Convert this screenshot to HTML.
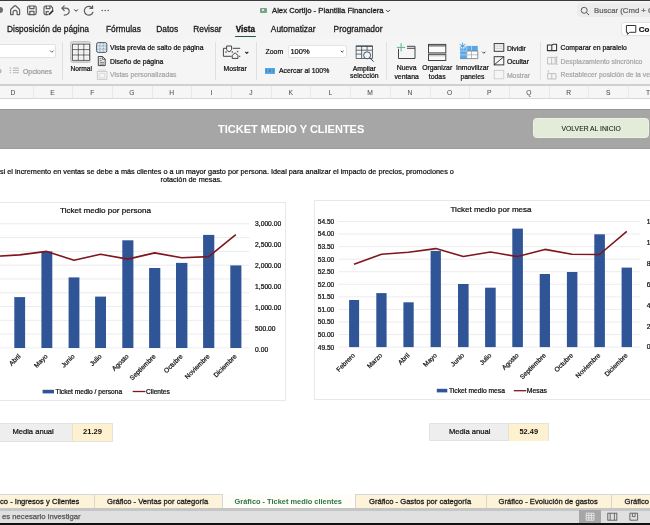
<!DOCTYPE html>
<html><head><meta charset="utf-8">
<style>
*{margin:0;padding:0;box-sizing:border-box}
html,body{width:650px;height:525px;overflow:hidden;background:#fff}
body{position:relative;font-family:"Liberation Sans",sans-serif;color:#111}
.a{position:absolute;white-space:nowrap;line-height:1}
.b{font-weight:700}
.m{font-weight:400;-webkit-text-stroke:0.22px currentColor}
.m2{font-weight:400;-webkit-text-stroke:0.27px currentColor}
svg{position:absolute;overflow:visible}
</style></head><body>
<div id="wrap" style="position:absolute;left:0;top:0;width:650px;height:525px;will-change:transform">

<!-- top title bar -->
<div class="a" style="left:0;top:0;width:650px;height:38px;background:#f4f4f4"></div>
<div class="a" style="left:0;top:0;width:650px;height:1px;background:#3b3b3b"></div>
<div class="a" style="left:-3px;top:7px;width:6px;height:6px;border-radius:50%;background:#6e6e6e"></div>

<!-- quick access icons -->
<svg style="left:0;top:0" width="130" height="20" fill="none" stroke="#5e5e5e" stroke-width="1.2" stroke-linejoin="round" stroke-linecap="round">
  <path d="M10.6 14.6 V10.2 Q10.6 9.5 11.1 9 L14.3 6 Q15.1 5.3 15.9 6 L19.1 9 Q19.6 9.5 19.6 10.2 V14.6 H17.1 V12.3 A2 2 0 0 0 13.1 12.3 V14.6 Z"/>
  <rect x="27.6" y="6" width="8.6" height="8.7" rx="1.6"/>
  <path d="M29.8 6 V8.6 H34 V6 M29.8 14.7 V11.4 H34 V14.7"/>
  <path d="M48 14.7 H45.6 Q44 14.7 44 13.1 V7.6 Q44 6 45.6 6 H50.8 L52.6 7.8 V9.8"/>
  <path d="M46.2 6 V8.6 H50 V6 M46.2 14.7 V11.6 H48.5"/>
  <path d="M49 14.6 L53.2 10.4" stroke="#333" stroke-width="1.7" stroke-linecap="butt"/>
  <path d="M62.3 8.2 H65.6 Q69.2 8.2 69.2 11.4 Q69.2 14.2 64.2 15.2"/>
  <path d="M64.2 5.9 L61.9 8.2 L64.2 10.5"/>
  <path d="M74.5 9.7 L76.1 11.3 L77.7 9.7" stroke="#333" stroke-width="1"/>
  <path d="M92.3 8.2 A4.4 4.4 0 1 0 92.9 12.2"/>
  <path d="M90 8.4 H92.6 V5.8"/>
  <circle cx="102.2" cy="10.6" r="0.75" fill="#555" stroke="none"/><circle cx="105.2" cy="10.6" r="0.75" fill="#555" stroke="none"/><circle cx="108.2" cy="10.6" r="0.75" fill="#555" stroke="none"/>
</svg>

<!-- title -->
<div class="a" style="left:259.8px;top:8px;width:7.4px;height:4.7px;background:#79a489;border-radius:0.8px"></div>
<div class="a" style="left:261.6px;top:9.2px;width:2.2px;height:2.3px;background:#d5e6da"></div>
<div class="a m" style="left:272px;top:6.6px;font-size:7.72px;color:#222;-webkit-text-stroke:0.3px #222">Alex Cortijo - Plantilla Financiera</div>
<svg style="left:0;top:0" width="1" height="1"><path d="M386 9.9 L388 11.9 L390 9.9" fill="none" stroke="#444" stroke-width="1"/></svg>

<!-- search -->
<div class="a" style="left:577.3px;top:3px;width:90px;height:14.3px;background:#ececec;border-radius:4px"></div>
<svg style="left:0;top:0" width="1" height="1"><circle cx="584.2" cy="10.3" r="3" fill="none" stroke="#555" stroke-width="0.95"/><path d="M586.4 12.5 L589 15" stroke="#555" stroke-width="1"/></svg>
<div class="a m" style="left:594px;top:6.9px;font-size:7.75px;color:#5e5e5e">Buscar (Cmd + C</div>

<!-- menu tabs -->
<div class="a m2" style="left:7px;top:24.9px;font-size:8.4px;color:#1a1a1a">Disposición de página</div>
<div class="a m2" style="left:106px;top:24.9px;font-size:8.4px;color:#1a1a1a">Fórmulas</div>
<div class="a m2" style="left:156.3px;top:24.9px;font-size:8.4px;color:#1a1a1a">Datos</div>
<div class="a m2" style="left:193.2px;top:24.9px;font-size:8.4px;color:#1a1a1a">Revisar</div>
<div class="a b" style="left:235.8px;top:25.6px;font-size:8.15px;color:#111;-webkit-text-stroke:0.3px #111">Vista</div>
<div class="a" style="left:235px;top:35.5px;width:21px;height:1.4px;background:#1f5c3c;border-radius:1px"></div>
<div class="a m2" style="left:270.8px;top:24.9px;font-size:8.4px;color:#1a1a1a">Automatizar</div>
<div class="a m2" style="left:333.6px;top:24.9px;font-size:8.4px;color:#1a1a1a">Programador</div>
<div class="a" style="left:620.8px;top:22px;width:40px;height:14px;background:#fff;border:0.8px solid #e2e2e2;border-radius:3px"></div>
<svg style="left:0;top:0" width="1" height="1"><path d="M626.4 25.5 H635.8 V32.3 H629.8 L627.4 34.3 V32.3 H626.4 Z" fill="none" stroke="#333" stroke-width="1" stroke-linejoin="round"/></svg>
<div class="a b" style="left:638.8px;top:26.2px;font-size:8px;color:#111;-webkit-text-stroke:0.2px #111">Co</div>

<!-- ribbon -->
<div class="a" style="left:0;top:38px;width:650px;height:46px;background:#f5f5f5"></div>
<div class="a" style="left:-2px;top:44px;width:57.8px;height:14.4px;background:#fff;border:0.8px solid #e2e2e2;border-radius:2px"></div>
<svg style="left:0;top:0" width="1" height="1"><path d="M50 50.5 L51.8 52.3 L53.6 50.5" fill="none" stroke="#555" stroke-width="0.9"/></svg>
<svg style="left:0;top:0" width="1" height="1" stroke="#a4a4a4" stroke-width="0.9">
  <path d="M10.3 67.6 V68.7 M10.3 69.9 V71 M10.3 72.2 V73.3" stroke-width="1.1"/><path d="M12.9 68.1 H18.9 M12.9 70.4 H18.9 M12.9 72.7 H18.9" stroke-width="0.8"/>
</svg>
<div class="a m" style="left:-2.4px;top:67.4px;font-size:7.2px;color:#9a9a9a">o</div>
<div class="a m" style="left:23px;top:68.53px;font-size:6.85px;color:#9a9a9a">Opciones</div>
<div class="a" style="left:62px;top:42px;width:1px;height:38px;background:#dedede"></div>

<!-- Normal -->
<div class="a" style="left:70.2px;top:41.4px;width:21px;height:21.7px;background:linear-gradient(#dadada,#cfcfcf);border:0.8px solid #c6c6c6;border-radius:2.5px"></div>
<svg style="left:0;top:0" width="1" height="1" fill="none" stroke="#444" stroke-width="0.8">
  <rect x="72.6" y="44.2" width="16.9" height="16.1" fill="#fafafa"/>
  <path d="M78.3 44.2 V60.3 M83.8 44.2 V60.3 M72.6 49.6 H89.5 M72.6 55 H89.5"/>
  <path d="M75.4 44.2 V60.3 M81 44.2 V60.3 M86.6 44.2 V60.3 M72.6 46.9 H89.5 M72.6 52.3 H89.5 M72.6 57.7 H89.5" stroke="#c4c4c4" stroke-width="0.45" stroke-dasharray="0.9 0.9"/>
</svg>
<div class="a m" style="left:51.2px;width:60px;text-align:center;top:66.0px;font-size:6.64px;color:#111">Normal</div>

<svg style="left:0;top:0" width="1" height="1" fill="none" stroke-width="0.9">
  <rect x="96.6" y="42.6" width="10.2" height="9.8" rx="1.6" stroke="#4f5a63" stroke-width="1" fill="#dbe8f1"/>
  <path d="M99.9 43.2 V51.8 M103.4 43.2 V51.8 M97.2 45.9 H106.2 M97.2 49.2 H106.2" stroke="#6f8192" stroke-width="0.6" stroke-dasharray="1 0.6"/>
  <path d="M98.3 56.5 H102.6 L105.2 59.2 V65.6 H98.3 Z" stroke="#333" stroke-linejoin="round" fill="#f3f3f3"/>
  <path d="M102.4 56.6 V59.4 H105.2" stroke="#333" stroke-width="0.7"/>
  <path d="M99.6 58.6 H101.2 M99.6 60.4 H101.6 M99.6 62.3 H104 M99.6 64.1 H104" stroke="#555" stroke-width="0.8"/>
  <rect x="97.3" y="71.4" width="9.6" height="8" stroke="#c8c8c8"/>
  <path d="M98.2 70 H106 M99.3 73.3 H104.9 V78 H99.3 Z" stroke="#cfcfcf" stroke-width="0.7"/>
</svg>
<div class="a m" style="left:110px;top:44.92px;font-size:6.85px;color:#111">Vista previa de salto de página</div>
<div class="a m" style="left:110px;top:58.82px;font-size:6.85px;color:#111">Diseño de página</div>
<div class="a m" style="left:110px;top:72.22px;font-size:6.85px;color:#a6a6a6">Vistas personalizadas</div>
<div class="a" style="left:214.5px;top:42px;width:1px;height:38px;background:#e0e0e0"></div>

<!-- Mostrar -->
<svg style="left:0;top:0" width="1" height="1" fill="none" stroke="#3c3c3c" stroke-width="0.95" stroke-linejoin="round">
  <path d="M226.3 48.3 H223.4 V56.3 H231.5"/>
  <path d="M232.8 48.3 H240.2"/>
  <path d="M226.6 46 H231.6 V49.3 Q231.6 50.6 229.1 51.8 Q226.6 50.6 226.6 49.3 Z"/>
  <path d="M232.2 58.4 V55.4 L235.1 52.8 L238 55.4 V58.4 Z"/>
  <path d="M239 56.3 H240.3"/>
  <circle cx="226" cy="52" r="0.35" fill="#555"/><circle cx="232.2" cy="52" r="0.35" fill="#555"/><circle cx="237.7" cy="51.7" r="0.35" fill="#555"/>
  <path d="M245.3 51.9 L246.8 53.4 L248.3 51.9" stroke="#222" stroke-width="1.1"/>
</svg>
<div class="a m" style="left:205.1px;width:60px;text-align:center;top:65.5px;font-size:6.85px;color:#111">Mostrar</div>
<div class="a" style="left:256px;top:42px;width:1px;height:38px;background:#e0e0e0"></div>

<!-- Zoom -->
<div class="a m" style="left:265.6px;top:48.72px;font-size:6.85px;color:#111">Zoom</div>
<div class="a" style="left:287.6px;top:45px;width:59.4px;height:13px;background:#fff;border:0.8px solid #e4e4e4;border-radius:2px"></div>
<div class="a m" style="left:290.4px;top:48.2px;font-size:7.5px;color:#111">100%</div>
<svg style="left:0;top:0" width="1" height="1"><path d="M340.8 50.8 L342.2 52.2 L343.6 50.8" fill="none" stroke="#333" stroke-width="0.9"/></svg>
<div class="a" style="left:265px;top:68px;width:10px;height:5.6px;background:#5aa9e0"></div>
<svg style="left:0;top:0" width="1" height="1" fill="none" stroke="#2d6fa6" stroke-width="0.6">
  <path d="M266.3 69 V72.6 M268.8 69.2 L270.8 72.4 M270.8 69.2 L268.8 72.4 M273.2 69 V72.6"/>
</svg>
<div class="a m" style="left:279px;top:68.32px;font-size:6.85px;color:#111">Acercar al 100%</div>

<!-- Ampliar seleccion -->
<svg style="left:0;top:0" width="1" height="1" fill="none" stroke="#37424a" stroke-width="0.75">
  <path d="M361.6 50.2 H372.6 V58.6 H361.6 Z" fill="#e6f1f9" stroke="none"/>
  <rect x="356.1" y="46" width="16.5" height="12.6" fill="none"/>
  <path d="M356.1 46.2 H372.6" stroke-width="1.1"/>
  <path d="M361.6 46 V58.6 M367.1 46 V50.2 M356.1 50.2 H372.6 M356.1 54.1 H361.6"/>
  <circle cx="367.1" cy="55.3" r="3.5" fill="#eef5fb" stroke-width="0.9"/>
  <path d="M369.7 57.8 L373.6 61.6" stroke-width="1"/>
</svg>
<div class="a m" style="left:334.3px;width:60px;text-align:center;top:65.6px;font-size:6.85px;color:#111">Ampliar</div>
<div class="a m" style="left:334.3px;width:60px;text-align:center;top:73.30px;font-size:6.85px;color:#111">selección</div>
<div class="a" style="left:385.5px;top:42px;width:1px;height:38px;background:#e0e0e0"></div>

<!-- Nueva ventana -->
<svg style="left:0;top:0" width="1" height="1" fill="none" stroke-width="0.95">
  <path d="M398.5 48.8 V58.5 H415 V46.3 H407" stroke="#3c3c3c"/>
  <path d="M407 48.3 H415" stroke="#3c3c3c"/>
  <path d="M401.1 43.2 V51.5 M396.9 47.4 H405.2" stroke="#4fae78" stroke-width="0.9"/>
</svg>
<div class="a m" style="left:376.6px;width:60px;text-align:center;top:65.4px;font-size:6.85px;color:#111">Nueva</div>
<div class="a m" style="left:376.6px;width:60px;text-align:center;top:73.60px;font-size:6.85px;color:#111">ventana</div>

<!-- Organizar todas -->
<svg style="left:0;top:0" width="1" height="1" fill="none" stroke="#3c3c3c" stroke-width="0.95">
  <rect x="428.5" y="44.4" width="17.3" height="8.5" fill="#fbfbfb"/>
  <path d="M428.5 45.9 H445.8"/>
  <rect x="428.5" y="54.3" width="17.3" height="6.2" fill="#fbfbfb"/>
  <path d="M428.5 55.8 H445.8" stroke="#888" stroke-width="0.6"/>
</svg>
<div class="a m" style="left:407.2px;width:60px;text-align:center;top:65.4px;font-size:6.85px;color:#111">Organizar</div>
<div class="a m" style="left:407.2px;width:60px;text-align:center;top:73.60px;font-size:6.85px;color:#111">todas</div>

<!-- Inmovilizar -->
<svg style="left:0;top:0" width="1" height="1" fill="none" stroke-width="0.9">
  <rect x="460.1" y="45.9" width="17.7" height="12.7" fill="#fff"/>
  <rect x="460.1" y="45.9" width="17.7" height="5.1" fill="#5ba7e6" stroke="none"/>
  <rect x="460.1" y="45.9" width="6.7" height="12.7" fill="#5ba7e6" stroke="none"/>
  <path d="M466.8 51 V58.6 M471.5 51 V58.6 M466.8 54.8 H477.8" stroke="#8a96a0" stroke-width="0.6"/>
  <path d="M460.1 51 H466.8 M460.1 54.8 H466.8 M471.5 45.9 V51 M466.8 45.9 V51" stroke="#d7ebfa" stroke-width="0.6"/>
  <path d="M477.8 51 V58.6 H460.1 M466.8 51 H477.8" stroke="#6b7884" stroke-width="0.8"/>
  <path d="M462.6 42.6 V49.2 M459.7 44.25 L465.5 47.55 M459.7 47.55 L465.5 44.25" stroke="#f4f4f4" stroke-width="2.2"/>
  <path d="M462.6 42.6 V49.2 M459.7 44.25 L465.5 47.55 M459.7 47.55 L465.5 44.25" stroke="#3f97de" stroke-width="0.85"/>
  <path d="M482.2 51.7 L483.8 53.3 L485.4 51.7" stroke="#333" stroke-width="0.95"/>
</svg>
<div class="a m" style="left:442.4px;width:60px;text-align:center;top:65.4px;font-size:6.85px;color:#111">Inmovilizar</div>
<div class="a m" style="left:442.4px;width:60px;text-align:center;top:73.60px;font-size:6.85px;color:#111">paneles</div>

<!-- Dividir etc -->
<svg style="left:0;top:0" width="1" height="1" fill="none" stroke="#333" stroke-width="0.95">
  <rect x="494.2" y="43.6" width="9.6" height="7.7"/>
  <path d="M494.2 46.1 H503.8 M494.2 48.3 H503.8" stroke="#aaa" stroke-width="0.45"/>
  <rect x="494.2" y="56.7" width="9.6" height="8.2"/>
  <path d="M494.2 64.9 L503.8 56.7"/>
  <rect x="494.2" y="70.4" width="9.6" height="8.4" stroke="#cfcfcf"/>
</svg>
<div class="a m" style="left:506.9px;top:45.52px;font-size:6.85px;color:#111">Dividir</div>
<div class="a m" style="left:506.9px;top:59.00px;font-size:6.85px;color:#111">Ocultar</div>
<div class="a m" style="left:506.9px;top:72.60px;font-size:6.85px;color:#a6a6a6">Mostrar</div>
<div class="a" style="left:540.2px;top:42px;width:1px;height:38px;background:#e0e0e0"></div>

<svg style="left:0;top:0" width="1" height="1" fill="none" stroke-width="0.95" stroke-linejoin="round">
  <path d="M547.4 45 H551.8 V50.6 H547.4 Z M551.8 50.6 V45 L553.6 44.2 H556.6 V50.6 Z" stroke="#333" stroke-width="1.05"/>
  <path d="M547.6 57.4 H551.6 V64 H547.6 Z M551.6 57.4 H555.2 V64 H551.6 M556.6 56.6 V64.8 M555.8 57.4 L556.6 56.6 L557.4 57.4 M555.8 64 L556.6 64.8 L557.4 64" stroke="#bdbdbd"/>
  <path d="M548.3 70 V72.6 M547.6 73.6 H551.8 V79 H547.6 Z M551.8 73.6 H556 V79 H551.8" stroke="#bdbdbd"/>
</svg>
<div class="a m" style="left:560.6px;top:45.12px;font-size:6.85px;color:#111">Comparar en paralelo</div>
<div class="a m" style="left:560.6px;top:58.92px;font-size:6.85px;color:#a6a6a6">Desplazamiento sincrónico</div>
<div class="a m" style="left:560.6px;top:72.12px;font-size:6.85px;color:#a6a6a6">Restablecer posición de la ventana</div>

<!-- ribbon bottom line -->
<div class="a" style="left:0;top:83.8px;width:650px;height:2.2px;background:#d0d0d0"></div>

<!-- column headers -->
<div class="a" style="left:0;top:86px;width:650px;height:12.5px;background:#f6f6f6"></div>
<div class="a" style="left:0;top:98px;width:650px;height:1.2px;background:#d8d8d8"></div>
<div class="a" style="left:2.90px;top:90.3px;width:20px;text-align:center;font-size:6.7px;color:#505050;-webkit-text-stroke:0.05px #505050">D</div>
<div class="a" style="left:42.59px;top:90.3px;width:20px;text-align:center;font-size:6.7px;color:#505050;-webkit-text-stroke:0.05px #505050">E</div>
<div class="a" style="left:82.28px;top:90.3px;width:20px;text-align:center;font-size:6.7px;color:#505050;-webkit-text-stroke:0.05px #505050">F</div>
<div class="a" style="left:121.97px;top:90.3px;width:20px;text-align:center;font-size:6.7px;color:#505050;-webkit-text-stroke:0.05px #505050">G</div>
<div class="a" style="left:161.66px;top:90.3px;width:20px;text-align:center;font-size:6.7px;color:#505050;-webkit-text-stroke:0.05px #505050">H</div>
<div class="a" style="left:201.35px;top:90.3px;width:20px;text-align:center;font-size:6.7px;color:#505050;-webkit-text-stroke:0.05px #505050">I</div>
<div class="a" style="left:241.04px;top:90.3px;width:20px;text-align:center;font-size:6.7px;color:#505050;-webkit-text-stroke:0.05px #505050">J</div>
<div class="a" style="left:280.73px;top:90.3px;width:20px;text-align:center;font-size:6.7px;color:#505050;-webkit-text-stroke:0.05px #505050">K</div>
<div class="a" style="left:320.42px;top:90.3px;width:20px;text-align:center;font-size:6.7px;color:#505050;-webkit-text-stroke:0.05px #505050">L</div>
<div class="a" style="left:360.11px;top:90.3px;width:20px;text-align:center;font-size:6.7px;color:#505050;-webkit-text-stroke:0.05px #505050">M</div>
<div class="a" style="left:399.80px;top:90.3px;width:20px;text-align:center;font-size:6.7px;color:#505050;-webkit-text-stroke:0.05px #505050">N</div>
<div class="a" style="left:439.49px;top:90.3px;width:20px;text-align:center;font-size:6.7px;color:#505050;-webkit-text-stroke:0.05px #505050">O</div>
<div class="a" style="left:479.18px;top:90.3px;width:20px;text-align:center;font-size:6.7px;color:#505050;-webkit-text-stroke:0.05px #505050">P</div>
<div class="a" style="left:518.87px;top:90.3px;width:20px;text-align:center;font-size:6.7px;color:#505050;-webkit-text-stroke:0.05px #505050">Q</div>
<div class="a" style="left:558.56px;top:90.3px;width:20px;text-align:center;font-size:6.7px;color:#505050;-webkit-text-stroke:0.05px #505050">R</div>
<div class="a" style="left:598.25px;top:90.3px;width:20px;text-align:center;font-size:6.7px;color:#505050;-webkit-text-stroke:0.05px #505050">S</div>
<div class="a" style="left:637.94px;top:90.3px;width:20px;text-align:center;font-size:6.7px;color:#505050;-webkit-text-stroke:0.05px #505050">T</div>
<div class="a" style="left:32.60px;top:86px;width:0.8px;height:12px;background:#e9e9e9"></div>
<div class="a" style="left:72.29px;top:86px;width:0.8px;height:12px;background:#e9e9e9"></div>
<div class="a" style="left:111.98px;top:86px;width:0.8px;height:12px;background:#e9e9e9"></div>
<div class="a" style="left:151.67px;top:86px;width:0.8px;height:12px;background:#e9e9e9"></div>
<div class="a" style="left:191.36px;top:86px;width:0.8px;height:12px;background:#e9e9e9"></div>
<div class="a" style="left:231.05px;top:86px;width:0.8px;height:12px;background:#e9e9e9"></div>
<div class="a" style="left:270.74px;top:86px;width:0.8px;height:12px;background:#e9e9e9"></div>
<div class="a" style="left:310.43px;top:86px;width:0.8px;height:12px;background:#e9e9e9"></div>
<div class="a" style="left:350.12px;top:86px;width:0.8px;height:12px;background:#e9e9e9"></div>
<div class="a" style="left:389.81px;top:86px;width:0.8px;height:12px;background:#e9e9e9"></div>
<div class="a" style="left:429.50px;top:86px;width:0.8px;height:12px;background:#e9e9e9"></div>
<div class="a" style="left:469.19px;top:86px;width:0.8px;height:12px;background:#e9e9e9"></div>
<div class="a" style="left:508.88px;top:86px;width:0.8px;height:12px;background:#e9e9e9"></div>
<div class="a" style="left:548.57px;top:86px;width:0.8px;height:12px;background:#e9e9e9"></div>
<div class="a" style="left:588.26px;top:86px;width:0.8px;height:12px;background:#e9e9e9"></div>
<div class="a" style="left:627.95px;top:86px;width:0.8px;height:12px;background:#e9e9e9"></div>
<div class="a" style="left:667.64px;top:86px;width:0.8px;height:12px;background:#e9e9e9"></div>

<!-- sheet -->
<div class="a" style="left:0;top:108.8px;width:650px;height:40px;background:#a7a6a7;border-top:1px solid #979797;border-bottom:1px solid #9c9c9c"></div>
<div class="a b" style="left:218px;top:124.1px;font-size:11px;color:#fff">TICKET MEDIO Y CLIENTES</div>
<div class="a" style="left:533px;top:118.2px;width:116.2px;height:20.3px;background:#e2ecd8;border:1px solid #edf3e7;border-radius:3.5px"></div>
<div class="a m" style="left:561.5px;top:125.6px;font-size:6.8px;color:#111;-webkit-text-stroke:0.05px #111">VOLVER AL INICIO</div>

<div class="a m" style="left:0;top:167.6px;font-size:7.31px;color:#111">si el incremento en ventas se debe a más clientes o a un mayor gasto por persona. Ideal para analizar el impacto de precios, promociones o</div>
<div class="a m" style="left:160.5px;top:176.4px;font-size:7.3px;color:#111">rotación de mesas.</div>

<!-- chart frames -->
<div class="a" style="left:-5px;top:202px;width:291px;height:198.6px;border:1px solid #e8e8e8;background:#fff"></div>
<div class="a" style="left:314px;top:200.4px;width:360px;height:199.4px;border:1px solid #e8e8e8;background:#fff"></div>

<svg style="left:0;top:0" width="650" height="525" font-family="Liberation Sans, sans-serif">
<line x1="-6" y1="223.80" x2="249.4" y2="223.80" stroke="#eaeaea" stroke-width="0.9"/>
<line x1="-6" y1="237.59" x2="249.4" y2="237.59" stroke="#eaeaea" stroke-width="0.9"/>
<line x1="-6" y1="251.38" x2="249.4" y2="251.38" stroke="#eaeaea" stroke-width="0.9"/>
<line x1="-6" y1="265.17" x2="249.4" y2="265.17" stroke="#eaeaea" stroke-width="0.9"/>
<line x1="-6" y1="278.96" x2="249.4" y2="278.96" stroke="#eaeaea" stroke-width="0.9"/>
<line x1="-6" y1="292.75" x2="249.4" y2="292.75" stroke="#eaeaea" stroke-width="0.9"/>
<line x1="-6" y1="306.54" x2="249.4" y2="306.54" stroke="#eaeaea" stroke-width="0.9"/>
<line x1="-6" y1="320.33" x2="249.4" y2="320.33" stroke="#eaeaea" stroke-width="0.9"/>
<line x1="-6" y1="334.12" x2="249.4" y2="334.12" stroke="#eaeaea" stroke-width="0.9"/>
<line x1="-6" y1="347.91" x2="249.4" y2="347.91" stroke="#eaeaea" stroke-width="0.9"/>
<rect x="14.3" y="297.1" width="10.80" height="50.90" fill="#2f5597"/>
<rect x="41.4" y="251.4" width="10.90" height="96.60" fill="#2f5597"/>
<rect x="68.6" y="277.4" width="10.80" height="70.60" fill="#2f5597"/>
<rect x="95.1" y="296.6" width="10.90" height="51.40" fill="#2f5597"/>
<rect x="122.3" y="240.3" width="11.10" height="107.70" fill="#2f5597"/>
<rect x="149.1" y="268" width="11.20" height="80.00" fill="#2f5597"/>
<rect x="176" y="262.9" width="11.40" height="85.10" fill="#2f5597"/>
<rect x="203.1" y="234.9" width="11.20" height="113.10" fill="#2f5597"/>
<rect x="230.3" y="265.4" width="11.10" height="82.60" fill="#2f5597"/>
<polyline fill="none" stroke="#7f161e" stroke-width="1.6" stroke-linejoin="round" points="-7.3,256.5 19.7,254.9 46.8,251.4 74,260.3 100.5,254.3 127.8,259.1 154.7,252.9 181.7,257.7 208.7,256.6 235.8,234.6"/>
<text x="255.10" y="226.20" font-size="6.7" text-anchor="start" fill="#111" font-weight="400" stroke="#111" stroke-width="0.24" >3,000.00</text>
<text x="255.10" y="247.13" font-size="6.7" text-anchor="start" fill="#111" font-weight="400" stroke="#111" stroke-width="0.24" >2,500.00</text>
<text x="255.10" y="268.06" font-size="6.7" text-anchor="start" fill="#111" font-weight="400" stroke="#111" stroke-width="0.24" >2,000.00</text>
<text x="255.10" y="288.99" font-size="6.7" text-anchor="start" fill="#111" font-weight="400" stroke="#111" stroke-width="0.24" >1,500.00</text>
<text x="255.10" y="309.92" font-size="6.7" text-anchor="start" fill="#111" font-weight="400" stroke="#111" stroke-width="0.24" >1,000.00</text>
<text x="255.10" y="330.85" font-size="6.7" text-anchor="start" fill="#111" font-weight="400" stroke="#111" stroke-width="0.24" >500.00</text>
<text x="255.10" y="351.78" font-size="6.7" text-anchor="start" fill="#111" font-weight="400" stroke="#111" stroke-width="0.24" >0.00</text>
<text x="60.00" y="213.40" font-size="8.1" text-anchor="start" fill="#111" font-weight="400" stroke="#111" stroke-width="0.24" >Ticket medio por persona</text>
<text transform="translate(18.25,354) rotate(-45)" font-size="6.6" text-anchor="end" fill="#111" stroke="#111" stroke-width="0.22" dy="4">Abril</text>
<text transform="translate(45.26,354) rotate(-45)" font-size="6.6" text-anchor="end" fill="#111" stroke="#111" stroke-width="0.22" dy="4">Mayo</text>
<text transform="translate(72.27,354) rotate(-45)" font-size="6.6" text-anchor="end" fill="#111" stroke="#111" stroke-width="0.22" dy="4">Junio</text>
<text transform="translate(99.28,354) rotate(-45)" font-size="6.6" text-anchor="end" fill="#111" stroke="#111" stroke-width="0.22" dy="4">Julio</text>
<text transform="translate(126.29,354) rotate(-45)" font-size="6.6" text-anchor="end" fill="#111" stroke="#111" stroke-width="0.22" dy="4">Agosto</text>
<text transform="translate(153.30,354) rotate(-45)" font-size="6.6" text-anchor="end" fill="#111" stroke="#111" stroke-width="0.22" dy="4">Septiembre</text>
<text transform="translate(180.31,354) rotate(-45)" font-size="6.6" text-anchor="end" fill="#111" stroke="#111" stroke-width="0.22" dy="4">Octubre</text>
<text transform="translate(207.32,354) rotate(-45)" font-size="6.6" text-anchor="end" fill="#111" stroke="#111" stroke-width="0.22" dy="4">Noviembre</text>
<text transform="translate(234.33,354) rotate(-45)" font-size="6.6" text-anchor="end" fill="#111" stroke="#111" stroke-width="0.22" dy="4">Diciembre</text>
<rect x="42.6" y="389.8" width="11.4" height="3.6" fill="#2f5597"/>
<text x="55.60" y="393.90" font-size="6.6" text-anchor="start" fill="#111" font-weight="400" stroke="#111" stroke-width="0.24" >Ticket medio / persona</text>
<line x1="132.7" y1="391.5" x2="145.4" y2="391.5" stroke="#7f161e" stroke-width="1.3"/>
<text x="146.00" y="393.90" font-size="6.6" text-anchor="start" fill="#111" font-weight="400" stroke="#111" stroke-width="0.24" >Clientes</text>
<line x1="338.6" y1="221.50" x2="640" y2="221.50" stroke="#eaeaea" stroke-width="0.9"/>
<line x1="338.6" y1="234.06" x2="640" y2="234.06" stroke="#eaeaea" stroke-width="0.9"/>
<line x1="338.6" y1="246.62" x2="640" y2="246.62" stroke="#eaeaea" stroke-width="0.9"/>
<line x1="338.6" y1="259.18" x2="640" y2="259.18" stroke="#eaeaea" stroke-width="0.9"/>
<line x1="338.6" y1="271.74" x2="640" y2="271.74" stroke="#eaeaea" stroke-width="0.9"/>
<line x1="338.6" y1="284.30" x2="640" y2="284.30" stroke="#eaeaea" stroke-width="0.9"/>
<line x1="338.6" y1="296.86" x2="640" y2="296.86" stroke="#eaeaea" stroke-width="0.9"/>
<line x1="338.6" y1="309.42" x2="640" y2="309.42" stroke="#eaeaea" stroke-width="0.9"/>
<line x1="338.6" y1="321.98" x2="640" y2="321.98" stroke="#eaeaea" stroke-width="0.9"/>
<line x1="338.6" y1="334.54" x2="640" y2="334.54" stroke="#eaeaea" stroke-width="0.9"/>
<line x1="338.6" y1="347.10" x2="640" y2="347.10" stroke="#eaeaea" stroke-width="0.9"/>
<rect x="349.1" y="300" width="10.00" height="47.10" fill="#2f5597"/>
<rect x="376.3" y="293.1" width="10.30" height="54.00" fill="#2f5597"/>
<rect x="403.4" y="302.3" width="10.30" height="44.80" fill="#2f5597"/>
<rect x="430.6" y="250.9" width="10.30" height="96.20" fill="#2f5597"/>
<rect x="458" y="284" width="10.60" height="63.10" fill="#2f5597"/>
<rect x="485.1" y="287.7" width="10.60" height="59.40" fill="#2f5597"/>
<rect x="512.3" y="228.6" width="10.60" height="118.50" fill="#2f5597"/>
<rect x="539.7" y="274" width="10.30" height="73.10" fill="#2f5597"/>
<rect x="566.9" y="272" width="10.50" height="75.10" fill="#2f5597"/>
<rect x="594.3" y="234.3" width="10.60" height="112.80" fill="#2f5597"/>
<rect x="621.6" y="267.6" width="10.40" height="79.50" fill="#2f5597"/>
<polyline fill="none" stroke="#7f161e" stroke-width="1.6" stroke-linejoin="round" points="354,264.3 381.5,254.3 408.5,252.3 435.8,248.6 463.3,256.5 490.4,252 517.6,256.6 544.9,249.4 572,254.3 599.5,254.5 626.8,231.3"/>
<text x="334.30" y="223.90" font-size="6.6" text-anchor="end" fill="#111" font-weight="400" stroke="#111" stroke-width="0.24" >54.50</text>
<text x="334.30" y="236.46" font-size="6.6" text-anchor="end" fill="#111" font-weight="400" stroke="#111" stroke-width="0.24" >54.00</text>
<text x="334.30" y="249.02" font-size="6.6" text-anchor="end" fill="#111" font-weight="400" stroke="#111" stroke-width="0.24" >53.50</text>
<text x="334.30" y="261.58" font-size="6.6" text-anchor="end" fill="#111" font-weight="400" stroke="#111" stroke-width="0.24" >53.00</text>
<text x="334.30" y="274.14" font-size="6.6" text-anchor="end" fill="#111" font-weight="400" stroke="#111" stroke-width="0.24" >52.50</text>
<text x="334.30" y="286.70" font-size="6.6" text-anchor="end" fill="#111" font-weight="400" stroke="#111" stroke-width="0.24" >52.00</text>
<text x="334.30" y="299.26" font-size="6.6" text-anchor="end" fill="#111" font-weight="400" stroke="#111" stroke-width="0.24" >51.50</text>
<text x="334.30" y="311.82" font-size="6.6" text-anchor="end" fill="#111" font-weight="400" stroke="#111" stroke-width="0.24" >51.00</text>
<text x="334.30" y="324.38" font-size="6.6" text-anchor="end" fill="#111" font-weight="400" stroke="#111" stroke-width="0.24" >50.50</text>
<text x="334.30" y="336.94" font-size="6.6" text-anchor="end" fill="#111" font-weight="400" stroke="#111" stroke-width="0.24" >50.00</text>
<text x="334.30" y="349.50" font-size="6.6" text-anchor="end" fill="#111" font-weight="400" stroke="#111" stroke-width="0.24" >49.50</text>
<text x="646.70" y="224.00" font-size="6.7" text-anchor="start" fill="#111" font-weight="400" stroke="#111" stroke-width="0.24" >12</text>
<text x="646.70" y="244.90" font-size="6.7" text-anchor="start" fill="#111" font-weight="400" stroke="#111" stroke-width="0.24" >10</text>
<text x="646.70" y="265.80" font-size="6.7" text-anchor="start" fill="#111" font-weight="400" stroke="#111" stroke-width="0.24" >8</text>
<text x="646.70" y="286.70" font-size="6.7" text-anchor="start" fill="#111" font-weight="400" stroke="#111" stroke-width="0.24" >6</text>
<text x="646.70" y="307.60" font-size="6.7" text-anchor="start" fill="#111" font-weight="400" stroke="#111" stroke-width="0.24" >4</text>
<text x="646.70" y="328.50" font-size="6.7" text-anchor="start" fill="#111" font-weight="400" stroke="#111" stroke-width="0.24" >2</text>
<text x="646.70" y="349.40" font-size="6.7" text-anchor="start" fill="#111" font-weight="400" stroke="#111" stroke-width="0.24" >0</text>
<text x="450.50" y="212.00" font-size="8.05" text-anchor="start" fill="#111" font-weight="400" stroke="#111" stroke-width="0.24" >Ticket medio por mesa</text>
<text transform="translate(352.60,353) rotate(-45)" font-size="6.6" text-anchor="end" fill="#111" stroke="#111" stroke-width="0.22" dy="4">Febrero</text>
<text transform="translate(379.87,353) rotate(-45)" font-size="6.6" text-anchor="end" fill="#111" stroke="#111" stroke-width="0.22" dy="4">Marzo</text>
<text transform="translate(407.14,353) rotate(-45)" font-size="6.6" text-anchor="end" fill="#111" stroke="#111" stroke-width="0.22" dy="4">Abril</text>
<text transform="translate(434.41,353) rotate(-45)" font-size="6.6" text-anchor="end" fill="#111" stroke="#111" stroke-width="0.22" dy="4">Mayo</text>
<text transform="translate(461.68,353) rotate(-45)" font-size="6.6" text-anchor="end" fill="#111" stroke="#111" stroke-width="0.22" dy="4">Junio</text>
<text transform="translate(488.95,353) rotate(-45)" font-size="6.6" text-anchor="end" fill="#111" stroke="#111" stroke-width="0.22" dy="4">Julio</text>
<text transform="translate(516.22,353) rotate(-45)" font-size="6.6" text-anchor="end" fill="#111" stroke="#111" stroke-width="0.22" dy="4">Agosto</text>
<text transform="translate(543.49,353) rotate(-45)" font-size="6.6" text-anchor="end" fill="#111" stroke="#111" stroke-width="0.22" dy="4">Septiembre</text>
<text transform="translate(570.76,353) rotate(-45)" font-size="6.6" text-anchor="end" fill="#111" stroke="#111" stroke-width="0.22" dy="4">Octubre</text>
<text transform="translate(598.03,353) rotate(-45)" font-size="6.6" text-anchor="end" fill="#111" stroke="#111" stroke-width="0.22" dy="4">Noviembre</text>
<text transform="translate(625.30,353) rotate(-45)" font-size="6.6" text-anchor="end" fill="#111" stroke="#111" stroke-width="0.22" dy="4">Diciembre</text>
<rect x="436.8" y="388.8" width="10.5" height="3.6" fill="#2f5597"/>
<text x="449.00" y="392.90" font-size="6.7" text-anchor="start" fill="#111" font-weight="400" stroke="#111" stroke-width="0.24" >Ticket medio mesa</text>
<line x1="513.8" y1="390.7" x2="526.2" y2="390.7" stroke="#7f161e" stroke-width="1.3"/>
<text x="526.80" y="392.90" font-size="6.86" text-anchor="start" fill="#111" font-weight="400" stroke="#111" stroke-width="0.24" >Mesas</text>
</svg>

<!-- media anual -->
<div class="a" style="left:-2px;top:423px;width:114.5px;height:18.6px;border:1px solid #e2e2e2;background:#eeeeef"></div>
<div class="a" style="left:72.4px;top:423.5px;width:39.6px;height:17.6px;background:#fdf1cf;border-left:1px solid #e6e1d0"></div>
<div class="a m" style="left:12.4px;top:428.4px;font-size:7.6px;color:#111">Media anual</div>
<div class="a b" style="left:83px;top:428.4px;font-size:7.6px;color:#111">21.29</div>

<div class="a" style="left:429px;top:423.4px;width:120px;height:18px;border:1px solid #e2e2e2;background:#eeeeef"></div>
<div class="a" style="left:508.3px;top:423.9px;width:40px;height:17px;background:#fdf1cf;border-left:1px solid #e6e1d0"></div>
<div class="a m" style="left:449px;top:428.2px;font-size:7.6px;color:#111">Media anual</div>
<div class="a b" style="left:519.5px;top:428.2px;font-size:7.4px;color:#111">52.49</div>

<!-- sheet tabs -->
<div class="a" style="left:0;top:493.8px;width:650px;height:14.5px;background:#fcf3d9;border-top:1px solid #d6d6d6"></div>
<div class="a" style="left:93.5px;top:494.5px;width:1px;height:13.5px;background:#d9d6cc"></div>
<div class="a" style="left:221.7px;top:493.5px;width:134.8px;height:14px;background:#fffdf7;border-left:1px solid #d6d6d6;border-right:1px solid #d6d6d6"></div>
<div class="a" style="left:486.2px;top:494.5px;width:1px;height:13.5px;background:#d9d6cc"></div>
<div class="a" style="left:611.4px;top:494.5px;width:1px;height:13.5px;background:#d9d6cc"></div>
<div class="a m2" style="left:0px;top:498px;font-size:7.6px;color:#1a1a1a">co - Ingresos y Clientes</div>
<div class="a m2" style="left:107px;top:498px;font-size:7.6px;color:#1a1a1a">Gráfico - Ventas por categoría</div>
<div class="a b" style="left:234.6px;top:498.2px;font-size:7.42px;color:#2d7548">Gráfico - Ticket medio clientes</div>
<div class="a m2" style="left:369px;top:498px;font-size:7.6px;color:#1a1a1a">Gráfico - Gastos por categoría</div>
<div class="a m2" style="left:498.6px;top:498px;font-size:7.6px;color:#1a1a1a">Gráfico - Evolución de gastos</div>
<div class="a m2" style="left:624.6px;top:498px;font-size:7.6px;color:#1a1a1a">Gráfico - Otros</div>

<!-- status bar -->
<div class="a" style="left:0;top:508px;width:650px;height:3px;background:#c6c6c6"></div>
<div class="a" style="left:0;top:511px;width:650px;height:12.4px;background:#e0e0e0"></div>
<div class="a m" style="left:2px;top:512.9px;font-size:7.7px;color:#555;-webkit-text-stroke:0.25px #555">es necesario investigar</div>
<div class="a" style="left:579.2px;top:509.8px;width:21.6px;height:13.6px;background:#a6a6a6"></div>
<svg style="left:0;top:0" width="1" height="1" fill="none" stroke="#5c5c5c" stroke-width="0.9">
  <path d="M586.2 513.2 H594 V520.2 H586.2 Z M588.8 513.2 V520.2 M591.4 513.2 V520.2 M586.2 515.5 H594 M586.2 517.9 H594" stroke="#f0f0f0" stroke-width="0.8"/>
  <rect x="607.8" y="513.2" width="9" height="7"/><path d="M610.2 513.2 V520.2 M614.4 513.2 V520.2"/>
  <path d="M629.9 513.2 H637.6 V520.2 H629.9 Z M632.4 513.2 V516.6 H635.1 V513.2"/>
</svg>
<div class="a" style="left:0;top:523.35px;width:650px;height:2px;background:#111"></div>

</div>
</body></html>
